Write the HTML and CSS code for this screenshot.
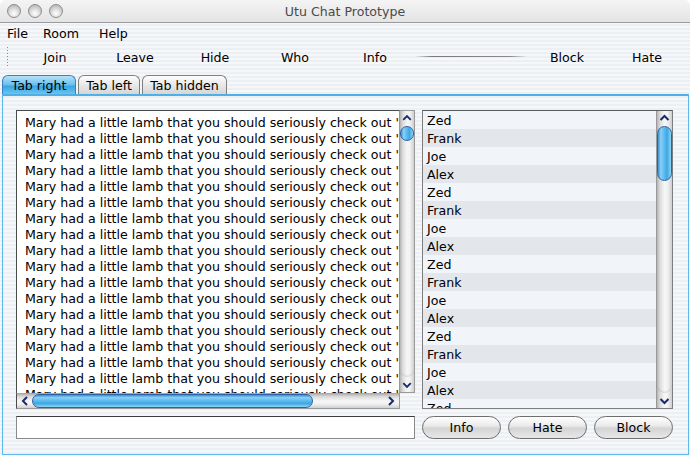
FILE: index.html
```html
<!DOCTYPE html>
<html>
<head>
<meta charset="utf-8">
<link rel="stylesheet" href="styles.css">
</head>
<body>
<div class="window">
  <div class="titlebar">
    <div class="lights"><span class="light"></span><span class="light"></span><span class="light"></span></div>
    <div class="title">Utu Chat Prototype</div>
  </div>
  <div class="menubar">
    <span class="menu m-file">File</span><span class="menu m-room">Room</span><span class="menu m-help">Help</span>
  </div>
  <div class="toolbar">
    <div class="grip"></div>
    <span class="tool">Join</span><span class="tool">Leave</span><span class="tool">Hide</span><span class="tool">Who</span><span class="tool">Info</span>
    <div class="sep"><div class="sepline"></div></div>
    <span class="tool">Block</span><span class="tool">Hate</span>
  </div>
  <div class="tabs">
    <div class="tab active t1">Tab right</div>
    <div class="tab t2">Tab left</div>
    <div class="tab t3">Tab hidden</div>
  </div>
  <div class="panel">
    <div class="chatpane">
      <div class="chattext">
        <div class="line">Mary had a little lamb that you should seriously check out 'www.utu.org'</div>
        <div class="line">Mary had a little lamb that you should seriously check out 'www.utu.org'</div>
        <div class="line">Mary had a little lamb that you should seriously check out 'www.utu.org'</div>
        <div class="line">Mary had a little lamb that you should seriously check out 'www.utu.org'</div>
        <div class="line">Mary had a little lamb that you should seriously check out 'www.utu.org'</div>
        <div class="line">Mary had a little lamb that you should seriously check out 'www.utu.org'</div>
        <div class="line">Mary had a little lamb that you should seriously check out 'www.utu.org'</div>
        <div class="line">Mary had a little lamb that you should seriously check out 'www.utu.org'</div>
        <div class="line">Mary had a little lamb that you should seriously check out 'www.utu.org'</div>
        <div class="line">Mary had a little lamb that you should seriously check out 'www.utu.org'</div>
        <div class="line">Mary had a little lamb that you should seriously check out 'www.utu.org'</div>
        <div class="line">Mary had a little lamb that you should seriously check out 'www.utu.org'</div>
        <div class="line">Mary had a little lamb that you should seriously check out 'www.utu.org'</div>
        <div class="line">Mary had a little lamb that you should seriously check out 'www.utu.org'</div>
        <div class="line">Mary had a little lamb that you should seriously check out 'www.utu.org'</div>
        <div class="line">Mary had a little lamb that you should seriously check out 'www.utu.org'</div>
        <div class="line">Mary had a little lamb that you should seriously check out 'www.utu.org'</div>
        <div class="line">Mary had a little lamb that you should seriously check out 'www.utu.org'</div>
      </div>
      <div class="vscroll">
        <div class="arrow"><svg width="15" height="15" viewBox="0 0 15 15"><polyline points="3.5,9 7.5,5 11.5,9" fill="none" stroke="#1b2a6b" stroke-width="2"/></svg></div>
        <div class="thumb thumb-small"></div>
        <div class="track"></div>
        <div class="arrow"><svg width="15" height="15" viewBox="0 0 15 15"><polyline points="3.5,6 7.5,10 11.5,6" fill="none" stroke="#1b2a6b" stroke-width="2"/></svg></div>
      </div>
      <div class="hscroll">
        <div class="harrow"><svg width="15" height="16" viewBox="0 0 15 16"><polyline points="10,4 6,8 10,12" fill="none" stroke="#1b2a6b" stroke-width="2"/></svg></div>
        <div class="hthumb"></div>
        <div class="htrack"></div>
        <div class="harrow"><svg width="15" height="16" viewBox="0 0 15 16"><polyline points="5,4 9,8 5,12" fill="none" stroke="#1b2a6b" stroke-width="2"/></svg></div>
      </div>
      <div class="corner"></div>
    </div>
    <div class="listpane">
      <div class="list">
        <div class="row">Zed</div><div class="row">Frank</div><div class="row">Joe</div><div class="row">Alex</div>
        <div class="row">Zed</div><div class="row">Frank</div><div class="row">Joe</div><div class="row">Alex</div>
        <div class="row">Zed</div><div class="row">Frank</div><div class="row">Joe</div><div class="row">Alex</div>
        <div class="row">Zed</div><div class="row">Frank</div><div class="row">Joe</div><div class="row">Alex</div>
        <div class="row">Zed</div>
      </div>
      <div class="vscroll">
        <div class="arrow"><svg width="15" height="15" viewBox="0 0 15 15"><polyline points="3.5,9 7.5,5 11.5,9" fill="none" stroke="#1b2a6b" stroke-width="2"/></svg></div>
        <div class="thumb thumb-big"></div>
        <div class="track"></div>
        <div class="arrow"><svg width="15" height="15" viewBox="0 0 15 15"><polyline points="3.5,6 7.5,10 11.5,6" fill="none" stroke="#1b2a6b" stroke-width="2"/></svg></div>
      </div>
    </div>
    <div class="field"></div>
    <div class="buttons">
      <div class="btn">Info</div><div class="btn">Hate</div><div class="btn">Block</div>
    </div>
  </div>
</div>
</body>
</html>
```
FILE: styles.css
```css
html, body {
  margin: 0;
  padding: 0;
  width: 690px;
  height: 456px;
  overflow: hidden;
  background: #ffffff;
}
.window {
  width: 690px;
  height: 456px;
  display: flex;
  flex-direction: column;
  font-family: "DejaVu Sans", "Liberation Sans", sans-serif;
  font-size: 12.3px;
  color: #000;
  background: repeating-linear-gradient(to bottom, #eceff3 0px, #eceff3 2px, #f5f7f9 2px, #f5f7f9 4px);
  border-radius: 6px 6px 0 0;
  overflow: hidden;
}
.titlebar {
  flex: none;
  display: flex;
  align-items: center;
  position: relative;
  background: linear-gradient(to bottom, #f4f4f4, #e4e4e4);
  border-bottom: 1px solid #9a9a9a;
  box-sizing: border-box;
  height: 23px;
}
.lights {
  display: flex;
  gap: 7px;
  padding-left: 7px;
}
.light {
  width: 12px;
  height: 12px;
  border-radius: 50%;
  border: 1px solid #8c8c8c;
  background: radial-gradient(circle at 50% 70%, #ffffff 0%, #e0e0e0 40%, #a8a8a8 100%);
}
.title {
  position: absolute;
  left: 0;
  right: 0;
  text-align: center;
  color: #4a4a4a;
  font-size: 12.6px;
}
.menubar {
  height: 21px;
  flex: none;
  display: flex;
  align-items: center;
}
.menu { font-size: 12.6px; }
.m-file { margin-left: 7px; }
.m-room { margin-left: 15px; }
.m-help { margin-left: 20px; }
.toolbar {
  height: 26px;
  flex: none;
  display: flex;
  align-items: center;
}
.grip {
  width: 3px;
  height: 22px;
  margin-left: 6px;
  margin-right: 6px;
  background: radial-gradient(circle, #8a8a8a 0.7px, transparent 1px) 0 0 / 3px 3px;
}
.tool {
  width: 80px;
  text-align: center;
  font-size: 12.6px;
}
.sep {
  width: 112px;
  display: flex;
  align-items: center;
}
.sepline {
  width: 112px;
  height: 1px;
  margin-top: -2px;
  background: linear-gradient(to right, rgba(120,120,120,0), #7a7a7a 15%, #8a8a8a 85%, rgba(120,120,120,0));
}
.tabs {
  height: 19px;
  flex: none;
  margin-top: 5px;
  display: flex;
  gap: 2px;
  padding-left: 2px;
}
.tab {
  height: 19px;
  box-sizing: border-box;
  border: 1px solid #808080;
  border-bottom: none;
  border-radius: 6px 6px 0 0;
  background: linear-gradient(to bottom, #fdfdfd 0%, #e8e8e8 50%, #d6d6d6 100%);
  text-align: center;
  line-height: 20px;
  font-size: 12.6px;
}
.tab.active {
  border-color: #3a7fc0;
  background: linear-gradient(to bottom, #b8e2fa 0%, #6ac0ee 45%, #3aa6e2 55%, #72c8f2 100%);
  height: 20px;
}
.t1 { width: 74px; }
.t2 { width: 62px; }
.t3 { width: 85px; }
.panel {
  flex: 1;
  margin: 0 1px 1px 2px;
  border: 1px solid #5fb8ea;
  border-top: 2px solid #4fb0e8;
  padding: 14px 15px 12px 13px;
  display: grid;
  grid-template-columns: 399px 251px;
  grid-template-rows: 299px 23px;
  gap: 7px;
}
.chatpane {
  display: grid;
  grid-template-columns: 384px 15px;
  grid-template-rows: 283px 16px;
}
.chattext {
  background: #fff;
  border: 1px solid #4a4a4a;
  border-right: 1px solid #9a9a9a;
  border-bottom: none;
  padding: 4px 0 0 8px;
  overflow: hidden;
  white-space: nowrap;
}
.line {
  height: 16px;
  line-height: 16px;
  font-size: 12.6px;
}
.vscroll {
  display: flex;
  flex-direction: column;
  border-top: 1px solid #9a9a9a;
  border-right: 1px solid #9a9a9a;
  background: linear-gradient(to right, #b4b4b4 0%, #dcdcdc 20%, #f6f6f6 50%, #f2f2f2 70%, #cfcfcf 100%);
}
.chatpane .vscroll { border-bottom: 1px solid #9a9a9a; }
.arrow {
  height: 15px;
  flex: none;
  display: flex;
  justify-content: center;
  align-items: center;
}
.arrow svg { display: block; }
.thumb {
  flex: none;
  border: 1px solid #2c63a6;
  border-radius: 8px;
  box-sizing: border-box;
  background: linear-gradient(to right, #3d8ed2 0%, #8ad0f6 22%, #5ab8ec 50%, #3ca8e4 70%, #8ed4f6 100%);
}
.thumb-small { height: 15px; }
.thumb-big { height: 55px; }
.track {
  flex: 1;
  border-radius: 0 0 8px 8px;
  box-shadow: inset 0 -2px 2px -1px rgba(0,0,0,0.12);
}
.hscroll {
  display: flex;
  border: 1px solid #9a9a9a;
  border-left: 1px solid #4a4a4a;
  border-top: 1px solid #a8a8a8;
  background: linear-gradient(to bottom, #b4b4b4 0%, #dcdcdc 20%, #f6f6f6 50%, #f2f2f2 70%, #cfcfcf 100%);
}
.harrow {
  width: 15px;
  flex: none;
  display: flex;
  align-items: center;
  justify-content: center;
}
.hthumb {
  width: 281px;
  flex: none;
  border: 1px solid #2c63a6;
  border-radius: 8px;
  box-sizing: border-box;
  background: linear-gradient(to bottom, #3d8ed2 0%, #8ad0f6 22%, #5ab8ec 50%, #3ca8e4 70%, #8ed4f6 100%);
}
.htrack {
  flex: 1;
  border-radius: 0 8px 8px 0;
}
.corner { background: transparent; }
.listpane {
  display: flex;
  border: 1px solid #7e7e7e;
  border-top-color: #5a5a5a;
  background: #f0f4f8;
}
.list {
  flex: 1;
  overflow: hidden;
}
.row {
  height: 18px;
  line-height: 19px;
  padding-left: 4px;
  font-size: 12.6px;
  background: #f1f4f8;
}
.row:nth-child(even) { background: #e3e7eb; }
.listpane .vscroll {
  width: 15px;
  border-top: none;
  border-right: none;
  border-left: 1px solid #9a9a9a;
}
.field {
  background: #fff;
  border: 1px solid #8a8a8a;
  border-top: 1px solid #3c3c3c;
  box-sizing: border-box;
}
.buttons {
  display: flex;
  gap: 7px;
}
.btn {
  width: 79px;
  height: 23px;
  box-sizing: border-box;
  border: 1px solid #6e6e6e;
  border-radius: 12px;
  background: linear-gradient(to bottom, #fefefe 0%, #ececec 40%, #d4d4d4 55%, #e8e8e8 100%);
  text-align: center;
  line-height: 22px;
  font-size: 12.6px;
}
```
